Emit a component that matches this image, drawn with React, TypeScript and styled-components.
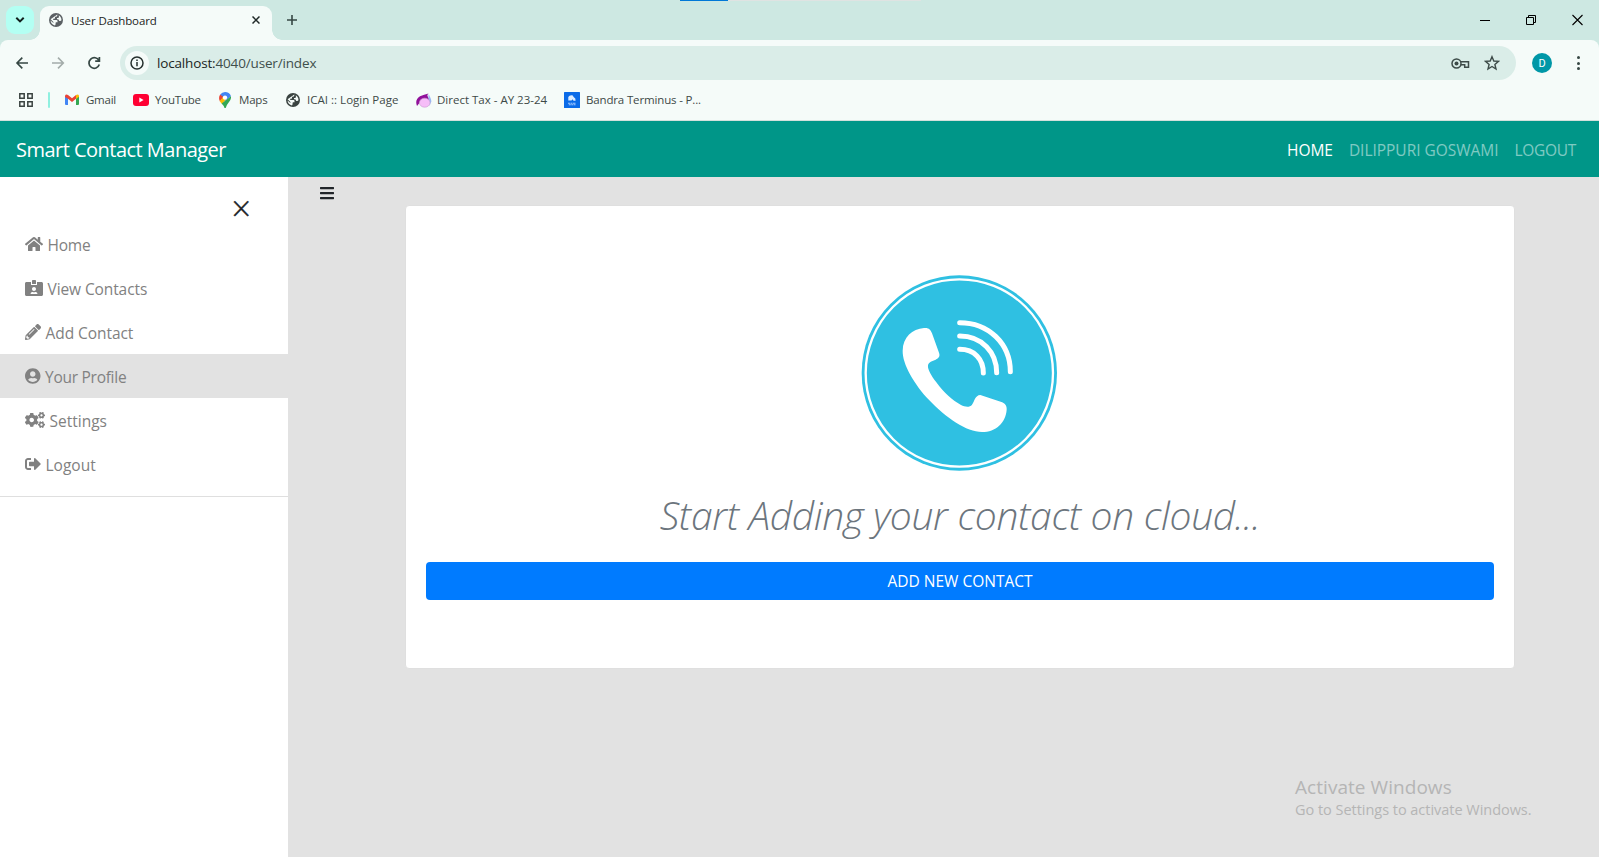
import React from "react";
import styled, { createGlobalStyle } from "styled-components";
import { FaHome, FaIdCardAlt, FaPencilAlt, FaUserCircle, FaCogs, FaSignOutAlt, FaBars } from "react-icons/fa";

const Global = createGlobalStyle`
  *, *::before, *::after { box-sizing: border-box; }
  body { margin: 0; font-family: "Open Sans", "Noto Sans", sans-serif; background: #e2e2e2; overflow: hidden; }
`;

const Screen = styled.div`
  position: relative;
  width: 1599px;
  height: 857px;
  display: flex;
  flex-direction: column;
  overflow: hidden;
`;

/* Browser window */
const TabStrip = styled.div`
  position: relative;
  height: 40px;
  flex: none;
  display: flex;
  align-items: flex-start;
  background: #cde8e2;
  padding-left: 6px;
`;
const TabSearch = styled.div`
  width: 28px;
  height: 28px;
  margin-top: 6px;
  border-radius: 9px;
  background: #b3fff3;
  display: flex;
  align-items: center;
  justify-content: center;
`;
const Tab = styled.div`
  position: relative;
  width: 232px;
  height: 34px;
  margin: 6px 0 0 6px;
  padding: 0 12px 6px 9px;
  border-radius: 9px 9px 0 0;
  background: #f5fbf9;
  display: flex;
  align-items: center;
  &::before, &::after {
    content: "";
    position: absolute;
    bottom: 0;
    width: 10px;
    height: 10px;
  }
  &::before { left: -10px; background: radial-gradient(circle at 0 0, transparent 9.5px, #f5fbf9 10px); }
  &::after { right: -10px; background: radial-gradient(circle at 100% 0, transparent 9.5px, #f5fbf9 10px); }
`;
const Label = styled.span<{ $size: number; $spacing?: number; $color?: string }>`
  font-size: ${(p) => p.$size}px;
  letter-spacing: ${(p) => p.$spacing ?? 0}px;
  color: ${(p) => p.$color ?? "#3d4947"};
  white-space: nowrap;
  line-height: 18px;
`;
const TabTitle = styled(Label)`
  margin-left: 8px;
  padding-top: 1px;
  flex: 1;
`;
const NewTab = styled.div`
  margin: 13px 0 0 15px;
  height: 14px;
  display: flex;
`;
const LoadingBar = styled.div`
  position: absolute;
  top: 0;
  left: 680px;
  width: 241px;
  height: 1px;
  background: linear-gradient(90deg, #0078d7 48px, #dfe3e2 48px);
`;
const WindowButtons = styled.div`
  margin-left: auto;
  padding: 14px 16px 0 0;
  display: flex;
  gap: 35px;
`;
const Toolbar = styled.div`
  height: 46px;
  flex: none;
  background: linear-gradient(#cde8e2 0 10px, #f5fbf9 10px);
`;
const ToolbarInner = styled.div`
  height: 46px;
  padding: 0 17px 0 15px;
  border-radius: 8px 8px 0 0;
  background: #f5fbf9;
  display: flex;
  align-items: center;
`;
const NavButtons = styled.div`
  width: 105px;
  display: flex;
  gap: 21px;
`;
const Omnibox = styled.div`
  height: 34px;
  width: 1396px;
  border-radius: 17px;
  background: #daede8;
  display: flex;
  align-items: center;
  padding: 0 16px 0 5px;
`;
const SiteInfo = styled.div`
  width: 24px;
  height: 24px;
  border-radius: 50%;
  background: #f5fbf9;
  display: flex;
  align-items: center;
  justify-content: center;
  margin-right: 8px;
`;
const OmniActions = styled.div`
  margin-left: auto;
  display: flex;
  align-items: center;
  gap: 14px;
`;
const Avatar = styled.div`
  width: 20px;
  height: 20px;
  margin-left: 16px;
  border-radius: 50%;
  background: #0097a7;
  color: #fff;
  font-size: 11px;
  font-family: Roboto, sans-serif;
  display: flex;
  align-items: center;
  justify-content: center;
`;
const Kebab = styled.div`
  margin-left: auto;
  width: 8px;
  display: flex;
  flex-direction: column;
  align-items: center;
  gap: 2.5px;
  i { width: 3px; height: 3px; border-radius: 50%; background: #364744; }
`;
const Bookmarks = styled.div`
  height: 35px;
  flex: none;
  display: flex;
  align-items: center;
  padding: 0 0 6px 19px;
  background: #f5fbf9;
  border-bottom: 1px solid #d3e0dc;
`;
const Divider = styled.div`
  width: 2px;
  height: 16px;
  margin: 0 15px 0 15px;
  border-radius: 1px;
  background: #8ff0e0;
`;
const Bookmark = styled.div<{ $width: number; $gap: number }>`
  width: ${(p) => p.$width}px;
  display: flex;
  align-items: center;
  gap: ${(p) => p.$gap}px;
  svg { flex: none; }
`;

/* Page */
const Navbar = styled.nav`
  height: 56px;
  flex: none;
  display: flex;
  align-items: center;
  justify-content: space-between;
  padding: 2px 23px 0 16px;
  background: #009688;
`;
const Brand = styled.div`
  font-size: 20px;
  letter-spacing: -0.52px;
  color: #fff;
  line-height: 30px;
`;
const NavLinks = styled.div`
  display: flex;
  gap: 16px;
`;
const NavLink = styled.a<{ $active?: boolean; $spacing: number }>`
  font-size: 15.5px;
  line-height: 24px;
  letter-spacing: ${(p) => p.$spacing}px;
  color: ${(p) => (p.$active ? "#fff" : "rgba(255,255,255,.5)")};
`;
const Body = styled.div`
  flex: 1;
  display: flex;
  background: #e2e2e2;
`;
const Sidebar = styled.aside`
  width: 288px;
  background: #fff;
`;
const Close = styled.div`
  height: 45px;
  padding: 9px 37px 0 0;
  text-align: right;
  font-size: 34px;
  font-weight: 300;
  line-height: 44px;
  color: #212529;
  -webkit-text-stroke: 0.4px #212529;
`;
const MenuItem = styled.a<{ $active?: boolean }>`
  height: 44px;
  display: flex;
  align-items: center;
  padding-left: 25px;
  color: #818181;
  background: ${(p) => (p.$active ? "#e2e2e2" : "transparent")};
  svg { margin-right: 4.5px; flex: none; }
`;
const MenuText = styled.span<{ $spacing: number }>`
  padding-top: 1px;
  font-size: 15.5px;
  letter-spacing: ${(p) => p.$spacing}px;
`;
const Rule = styled.hr`
  margin: 10px 0 0;
  border: 0;
  border-top: 1px solid #dfdfdf;
`;
const Content = styled.main`
  flex: 1;
  display: flex;
  align-items: flex-start;
`;
const Toggle = styled.div`
  width: 117px;
  padding: 8px 0 0 32px;
  color: #212529;
  svg { display: block; }
`;
const Card = styled.section`
  width: 1110px;
  height: 464px;
  margin-top: 28px;
  padding: 67px 20px 0;
  border: 1px solid #dfdfdf;
  border-radius: 4px;
  background: #fff;
  display: flex;
  flex-direction: column;
  align-items: center;
`;
const Headline = styled.h1`
  margin: 18px 0 0;
  font-size: 39px;
  font-weight: 300;
  font-style: italic;
  line-height: 48px;
  letter-spacing: -0.33px;
  color: #6c757d;
  white-space: nowrap;
`;
const AddButton = styled.button`
  width: 100%;
  height: 38px;
  margin-top: 23px;
  border: 0;
  border-radius: 4px;
  background: #007bff;
  color: #fff;
  font-family: inherit;
  font-size: 15.5px;
`;
const Watermark = styled.div`
  position: absolute;
  left: 1295px;
  top: 774px;
  color: #b5b5b5;
  white-space: nowrap;
`;
const WatermarkTitle = styled.div`
  font-size: 19px;
  line-height: 26px;
  letter-spacing: 0.05px;
`;
const WatermarkText = styled.div`
  font-size: 14.5px;
  line-height: 20px;
  letter-spacing: -0.03px;
`;

const Globe = ({ color, size }: { color: string; size: number }) => (
  <svg width={size} height={size} viewBox="0 0 14 14">
    <circle cx="7" cy="7" r="7" fill={color} />
    <path d="M8.3 1.6 V2.6 Q8.3 3.7 7.1 3.8 H6 V5 Q6 5.7 5.2 5.7 H4.2 V7 H7.6 Q8.5 7.1 8.5 8 V9.2 H7.2 Q6.6 9.3 6.6 10 V11 Q6.5 12 6 12.4 Q2 11.5 1.5 7.4 L4.4 10 V9 L1.6 6.3 M8.3 1.6 Q12.4 3 12.5 7.3 L11.3 8 Q10.2 8.3 9.9 7.2 Q9.8 6.2 8.8 6.2 H8 V5 H9 Q9.9 4.9 9.9 4 V2.2 Z" fill="#f5fbf9" />
  </svg>
);

const CallLogo = () => (
  <svg width="200" height="200" viewBox="60 39 600 600">
    <circle cx="358" cy="339" r="293" fill="#2fc0e2" />
    <circle cx="358" cy="339" r="281" fill="none" stroke="#fff" strokeWidth="7" />
    <path d="M252 204 C266 202 272 209 276 220 L297 278 C301 289 296 294 287 299 C277 304 266 305 264 316 C262 328 275 349 289 367 C311 397 338 422 363 435 C375 441 389 443 396 434 C404 423 405 406 421 405 L482 425 C495 429 501 437 500 449 C497 488 468 516 426 516 C379 516 319 474 268 421 C222 372 187 312 188 272 C189 231 217 207 252 204 Z" fill="#fff" />
    <g fill="none" stroke="#fff" strokeWidth="15" strokeLinecap="round">
      <path d="M359 268 C403 268 430 297 430 339" />
      <path d="M359 228 C426 228 470 277 470 338" />
      <path d="M359 188 C446 188 511 251 511 335" />
    </g>
  </svg>
);

const bookmarks = [
  { text: "Gmail", width: 68, gap: 7, spacing: -0.25, icon: (
    <svg width="14" height="12" viewBox="0 0 14 12">
      <path d="M0 1.5 L3 3.8 V11 H1 Q0 11 0 10Z" fill="#4285f4" />
      <path d="M11 3.8 L14 1.5 V10 Q14 11 13 11 H11Z" fill="#34a853" />
      <path d="M0 2 Q.6-.2 3 1 L7 4.2 11 1 V4.8 L7 7.9 3 4.8 0 3Z" fill="#ea4335" />
      <path d="M11 1 Q13.4-.2 14 2 V2.7 L11 4.9Z" fill="#fbbc04" />
    </svg>) },
  { text: "YouTube", width: 86, gap: 6, spacing: -0.2, icon: (
    <svg width="16" height="12" viewBox="0 0 16 12">
      <rect width="16" height="12" rx="3" fill="#ff0033" />
      <path d="M6.3 3.6 L10.6 6 6.3 8.4Z" fill="#fff" />
    </svg>) },
  { text: "Maps", width: 67, gap: 8, spacing: -0.2, icon: (
    <svg width="12" height="16" viewBox="0 0 12 16">
      <path d="M6 0 Q10.4 0 12 4.2 L6 9 1.2 2.5 Q3 0 6 0Z" fill="#4285f4" />
      <path d="M1.2 2.5 L4.6 5.2 1 9.4 Q-1 5.5 1.2 2.5Z" fill="#ea4335" />
      <path d="M4.2 5 L6.8 7.6 3 12 Q1.2 10 .7 8.9Z" fill="#fbbc04" />
      <path d="M12 4.2 Q12.5 7 10 10 Q7.3 13.3 6.7 16 H5.5 Q4.8 13.5 2.6 11.5Z" fill="#34a853" />
      <circle cx="6" cy="5.6" r="2.2" fill="#fff" />
    </svg>) },
  { text: "ICAI :: Login Page", width: 130, gap: 7, spacing: 0.02, icon: <Globe color="#3a4341" size={14} /> },
  { text: "Direct Tax - AY 23-24", width: 148, gap: 5, spacing: 0, icon: (
    <svg width="16" height="15" viewBox="0 0 16 15">
      <path d="M1 13 Q-1.5 6.5 4 3.2 Q8 1.5 12.5 .4 Q10.5 2 12 4 Q13 6 14 8 L5 8Z" fill="#90109a" />
      <path d="M12.5 1 Q15.5 6 15.3 8.5 L13.5 13 12.5 5Z" fill="#9ab9f2" />
      <ellipse cx="8.7" cy="9.7" rx="5.3" ry="4.5" fill="#f6bdf8" stroke="#c99bd0" strokeWidth=".6" />
    </svg>) },
  { text: "Bandra Terminus - P...", width: 150, gap: 6, spacing: -0.15, icon: (
    <svg width="16" height="16" viewBox="0 0 16 16">
      <rect width="16" height="16" rx=".5" fill="#0b6be8" />
      <path d="M4.3 8.5 V5 Q5.5 2.6 8.8 3.4 L9.6 5 Q12 6.3 11.6 8.7 H9.5 L8.6 7.2 7.5 8.6Z" fill="#dcecff" />
      <path d="M4 11.2 H12 M4.8 12.8 H11.5" stroke="#a5caff" strokeWidth="1.1" strokeDasharray="2 .5" />
    </svg>) },
];

const menu = [
  { text: "Home", Icon: FaHome, w: 18, spacing: -0.2 },
  { text: "View Contacts", Icon: FaIdCardAlt, w: 18, spacing: -0.1 },
  { text: "Add Contact", Icon: FaPencilAlt, w: 16, spacing: -0.06 },
  { text: "Your Profile", Icon: FaUserCircle, w: 15.5, spacing: -0.27, active: true },
  { text: "Settings", Icon: FaCogs, w: 20, spacing: 0 },
  { text: "Logout", Icon: FaSignOutAlt, w: 16, spacing: 0 },
];

export default function App() {
  return (
    <Screen>
      <Global />
      <TabStrip>
        <TabSearch>
          <svg width="10" height="6" viewBox="0 0 10 6" fill="none" stroke="#12201e" strokeWidth="2"><path d="M1.3 .8 L5 4.4 8.7 .8" /></svg>
        </TabSearch>
        <Tab>
          <Globe color="#5b6064" size={14} />
          <TabTitle $size={11.5} $spacing={-0.12} $color="#1c2423">User Dashboard</TabTitle>
          <svg width="8" height="8" viewBox="0 0 8 8" stroke="#1f2928" strokeWidth="1.5"><path d="M.5 .5 L7.5 7.5 M7.5 .5 L.5 7.5" /></svg>
        </Tab>
        <NewTab>
          <svg width="10" height="14" viewBox="0 0 10 14" stroke="#364744" strokeWidth="1.6"><path d="M5 2 V12 M0 7 H10" /></svg>
        </NewTab>
        <LoadingBar />
        <WindowButtons>
          <svg width="11" height="12" viewBox="0 0 11 12" stroke="#000"><path d="M0 6.5 H10" /></svg>
          <svg width="11" height="12" viewBox="0 0 11 12" fill="none" stroke="#000"><path d="M.5 3.5 H7.5 V10.5 H.5Z M2.5 3.5 V1.5 H9.5 V8.5 H7.5" /></svg>
          <svg width="11" height="12" viewBox="0 0 11 12" stroke="#000" strokeWidth="1.1"><path d="M.5 1 L10.5 11 M10.5 1 L.5 11" /></svg>
        </WindowButtons>
      </TabStrip>
      <Toolbar>
        <ToolbarInner>
          <NavButtons>
            <svg width="15" height="14" viewBox="0 0 15 14" fill="none" stroke="#364744" strokeWidth="1.6"><path d="M13 7 H2.3 M7.3 1.6 L2 7 7.3 12.4" /></svg>
            <svg width="15" height="14" viewBox="0 0 15 14" fill="none" stroke="#a3acaa" strokeWidth="1.6"><path d="M1 7 H12 M7 1.6 L12.3 7 7 12.4" /></svg>
            <svg width="14" height="14" viewBox="0 0 14 14" fill="none" stroke="#364744" strokeWidth="1.7"><path d="M12 4.6 A5.3 5.3 0 1 0 12.3 8.6 M12.4 1 V5.2 H8.2" /></svg>
          </NavButtons>
          <Omnibox>
            <SiteInfo>
              <svg width="14" height="14" viewBox="0 0 14 14"><circle cx="7" cy="7" r="6" fill="none" stroke="#26302e" strokeWidth="1.5" /><path d="M7 6 V10.3 M7 3.6 V5" stroke="#26302e" strokeWidth="1.5" /></svg>
            </SiteInfo>
            <Label $size={13.5} $spacing={-0.16} $color="#1b2523">localhost:<Label as="span" $size={13.5} $spacing={-0.16} $color="#3f4f4c">4040/user/index</Label></Label>
            <OmniActions>
              <svg width="19" height="11" viewBox="0 0 19 11" fill="none" stroke="#3d4b48" strokeWidth="1.5"><circle cx="5.5" cy="5.5" r="4.5" /><circle cx="5.5" cy="5.5" r="2" fill="#3d4b48" stroke="none" /><path d="M9.7 3.8 H17.5 V9.3 H13.7 V6.8 H9.8" /></svg>
              <svg width="16" height="16" viewBox="0 0 16 16" fill="none" stroke="#3d4b48" strokeWidth="1.4"><path d="M8 1.7 L9.8 6 14.5 6.3 10.9 9.4 12 14 8 11.5 4 14 5.1 9.4 1.5 6.3 6.2 6Z" /></svg>
            </OmniActions>
          </Omnibox>
          <Avatar>D</Avatar>
          <Kebab><i /><i /><i /></Kebab>
        </ToolbarInner>
      </Toolbar>
      <Bookmarks>
        <svg width="14" height="14" viewBox="0 0 14 14" fill="none" stroke="#3a4341" strokeWidth="1.5"><path d="M.8 .8 H5.2 V5.2 H.8Z M8.8 .8 H13.2 V5.2 H8.8Z M.8 8.8 H5.2 V13.2 H.8Z M8.8 8.8 H13.2 V13.2 H8.8Z" /></svg>
        <Divider />
        {bookmarks.map((b) => (
          <Bookmark key={b.text} $width={b.width} $gap={b.gap}>
            {b.icon}
            <Label $size={11.5} $spacing={b.spacing}>{b.text}</Label>
          </Bookmark>
        ))}
      </Bookmarks>
      <Navbar>
        <Brand>Smart Contact Manager</Brand>
        <NavLinks>
          <NavLink $active $spacing={-0.05}>HOME</NavLink>
          <NavLink $spacing={-0.03}>DILIPPURI GOSWAMI</NavLink>
          <NavLink $spacing={-0.3}>LOGOUT</NavLink>
        </NavLinks>
      </Navbar>
      <Body>
        <Sidebar>
          <Close>×</Close>
          {menu.map(({ text, Icon, w, spacing, active }) => (
            <MenuItem key={text} $active={active}>
              <Icon style={{ width: w, height: 16 }} />
              <MenuText $spacing={spacing}>{text}</MenuText>
            </MenuItem>
          ))}
          <Rule />
        </Sidebar>
        <Content>
          <Toggle><FaBars style={{ width: 14, height: 16 }} /></Toggle>
          <Card>
            <CallLogo />
            <Headline>Start Adding your contact on cloud...</Headline>
            <AddButton>ADD NEW CONTACT</AddButton>
          </Card>
        </Content>
      </Body>
      <Watermark>
        <WatermarkTitle>Activate Windows</WatermarkTitle>
        <WatermarkText>Go to Settings to activate Windows.</WatermarkText>
      </Watermark>
    </Screen>
  );
}
